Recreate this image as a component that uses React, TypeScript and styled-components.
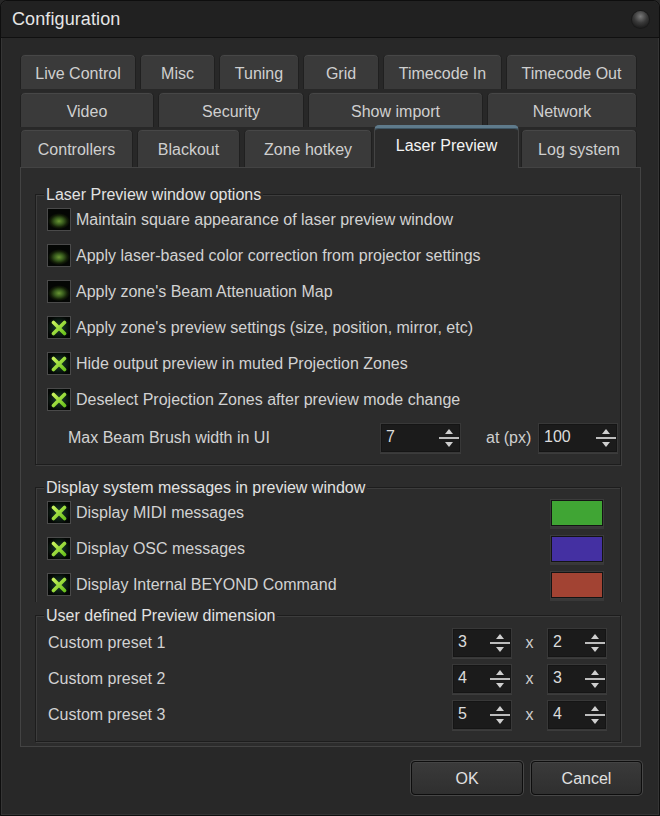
import React from "react";
import styled, { createGlobalStyle, css } from "styled-components";

const GlobalStyle = createGlobalStyle`
  html, body { margin: 0; padding: 0; background: #272727; }
  body { font-family: "Liberation Sans", Arial, sans-serif; }
  * { box-sizing: border-box; }
`;

const Window = styled.div`
  width: 660px;
  height: 816px;
  background: #282828;
  border: 1px solid #0e0e0e;
  border-radius: 7px 7px 0 0;
  box-shadow: inset 0 0 0 1px #353535;
  display: flex;
  flex-direction: column;
  overflow: hidden;
  color: #d0d0d0;
  font-size: 16px;
`;

const TitleBar = styled.div`
  height: 37px;
  flex: none;
  background: #212121;
  border-bottom: 1px solid #101010;
  border-radius: 6px 6px 0 0;
  display: flex;
  align-items: center;
  justify-content: space-between;
  padding: 0 10px 0 11px;
`;

const Title = styled.span`
  font-size: 18px;
  color: #e6e6e6;
  letter-spacing: 0.1px;
`;

const CloseKnob = styled.span`
  width: 17px;
  height: 17px;
  border-radius: 50%;
  background: radial-gradient(circle at 50% 32%, #7a7a7a 0%, #3a3a3a 45%, #141414 90%);
  box-shadow: 0 0 0 1px #1a1a1a;
`;

const Body = styled.div`
  flex: 1;
  padding: 16px 18px 0 19px;
  display: flex;
  flex-direction: column;
`;

const TabRow = styled.div<{ $h: number; $mb: number }>`
  display: flex;
  gap: 4px;
  width: 617px;
  height: ${(p) => p.$h}px;
  margin-bottom: ${(p) => p.$mb}px;
  align-items: flex-end;
  position: relative;
  z-index: 1;
`;

const Tab = styled.div<{ $w: number; $active?: boolean }>`
  flex: none;
  width: ${(p) => p.$w}px;
  height: 100%;
  background: #3a3a3a;
  border: 1px solid #202020;
  border-bottom: none;
  border-top-color: #2a2a2a;
  border-radius: 5px 5px 0 0;
  box-shadow: inset 0 1px 0 #474747;
  display: flex;
  align-items: center;
  justify-content: center;
  color: #cfcfcf;
  font-size: 16px;
  padding-top: 3px;
  white-space: nowrap;
  ${(p) =>
    p.$active &&
    css`
      height: 43px;
      margin: 0 -2px -1px;
      background: #2c2c2c;
      border-color: #444;
      border-top: 3px solid #5f7b8c;
      box-shadow: inset 0 1px 0 #3f5664;
      color: #f4f4f4;
      padding-top: 0;
      padding-bottom: 5px;
      position: relative;
      z-index: 2;
    `}
`;

const Panel = styled.div`
  width: 621px;
  background: #2c2c2c;
  border: 1px solid #434343;
  padding: 26px 19px 4px 14px;
  display: flex;
  flex-direction: column;
`;

const GroupBox = styled.div<{ $mt?: number; $pt: number; $pb: number; $open?: boolean }>`
  position: relative;
  margin-top: ${(p) => p.$mt ?? 0}px;
  padding: ${(p) => p.$pt}px 0 ${(p) => p.$pb}px;
  border: 1px solid #1d1d1d;
  box-shadow: inset 1px 1px 0 #3d3d3d, 1px 1px 0 #3d3d3d;
  display: flex;
  flex-direction: column;
  ${(p) =>
    p.$open &&
    css`
      border-bottom: none;
      box-shadow: inset 1px 1px 0 #3d3d3d, 1px 0 0 #3d3d3d;
    `}
`;

const Legend = styled.span`
  position: absolute;
  top: -9px;
  left: 8px;
  padding: 0 2px;
  background: #2c2c2c;
  line-height: 18px;
  font-size: 16px;
  color: #e2e2e2;
  white-space: nowrap;
`;

const CheckRow = styled.div`
  height: 36px;
  display: flex;
  align-items: center;
  padding: 1px 17px 0 11px;
  gap: 5px;
`;

const Label = styled.span<{ $w?: number }>`
  color: #d2d2d2;
  font-size: 16px;
  white-space: nowrap;
  ${(p) => p.$w !== undefined && css`width: ${p.$w}px; flex: none;`}
`;

const Grow = styled(Label)`
  flex: 1;
`;

const Box = styled.span<{ $checked?: boolean }>`
  flex: none;
  width: 24px;
  height: 23px;
  border: 1px solid #4a4a4a;
  display: flex;
  align-items: center;
  justify-content: center;
  background: ${(p) =>
    p.$checked
      ? "radial-gradient(ellipse 55% 55% at 50% 50%, #1d4632 0%, #0e2218 55%, #030604 100%)"
      : "radial-gradient(ellipse 50% 38% at 50% 58%, #6a9634 0%, #3a5e1e 40%, #142008 75%, #040604 100%)"};
`;

const Swatch = styled.span<{ $c: string }>`
  flex: none;
  width: 52px;
  height: 26px;
  background: ${(p) => p.$c};
  border: 1px solid #141414;
  box-shadow: 0 0 0 1px #3b3b3b, 0 2px 0 1px #383838;
`;

const FieldRow = styled.div<{ $pl: number; $mt?: number }>`
  height: 36px;
  margin-top: ${(p) => p.$mt ?? 0}px;
  display: flex;
  align-items: center;
  padding-left: ${(p) => p.$pl}px;
`;

const Spin = styled.div<{ $w: number }>`
  flex: none;
  width: ${(p) => p.$w}px;
  height: 28px;
  background: #1b1b1b;
  border: 1px solid #151515;
  box-shadow: 0 0 0 1px #383838, 0 1px 0 1px #3c3c3c;
  display: flex;
  align-items: center;
  justify-content: space-between;
  padding: 0 0 0 4px;
  color: #dcdcdc;
  font-size: 16px;
`;

const SpinValue = styled.span`
  padding-bottom: 2px;
`;

const Between = styled.span<{ $w: number; $ml?: number; $center?: boolean }>`
  flex: none;
  width: ${(p) => p.$w}px;
  margin-left: ${(p) => p.$ml ?? 0}px;
  text-align: ${(p) => (p.$center ? "center" : "left")};
  color: #cfcfcf;
  font-size: 16px;
  white-space: nowrap;
`;

const Footer = styled.div`
  width: 622px;
  display: flex;
  justify-content: flex-end;
  gap: 8px;
  padding-top: 14px;
`;

const Button = styled.button<{ $w: number }>`
  width: ${(p) => p.$w}px;
  height: 34px;
  border-radius: 4px;
  border: 1px solid #0d0d0d;
  background: linear-gradient(#3a3a3a, #2f2f2f);
  box-shadow: 0 0 0 1px #474747, inset 0 1px 0 #444;
  color: #e0e0e0;
  font-family: "Liberation Sans", Arial, sans-serif;
  font-size: 16px;
  padding: 2px 0 0;
`;

const XMark = () => (
  <svg width="16" height="16" viewBox="0 0 16 16">
    <defs>
      <linearGradient id="xg" x1="0" y1="0" x2="1" y2="1">
        <stop offset="0" stopColor="#c6f25a" />
        <stop offset="1" stopColor="#6cc41e" />
      </linearGradient>
    </defs>
    <path d="M2.5 2.5 L13.5 13.5 M13.5 2.5 L2.5 13.5" stroke="url(#xg)" strokeWidth="3.6" strokeLinecap="round" />
  </svg>
);

const Arrows = () => (
  <svg width="21" height="26" viewBox="0 0 21 26">
    <path d="M11 4 L15 9 L7 9 Z" fill="#cfcfcf" />
    <rect x="1" y="12" width="20" height="2" fill="#bdbdbd" />
    <path d="M7 17 L15 17 L11 22 Z" fill="#cfcfcf" />
  </svg>
);

const Check = ({ checked, label, color }: { checked?: boolean; label: string; color?: string }) => (
  <CheckRow>
    <Box $checked={checked}>{checked && <XMark />}</Box>
    <Grow>{label}</Grow>
    {color && <Swatch $c={color} />}
  </CheckRow>
);

const SpinBox = ({ w, v }: { w: number; v: string }) => (
  <Spin $w={w}>
    <SpinValue>{v}</SpinValue>
    <Arrows />
  </Spin>
);

const rows: { name: string; w: number; active?: boolean }[][] = [
  [
    { name: "Live Control", w: 116 },
    { name: "Misc", w: 75 },
    { name: "Tuning", w: 80 },
    { name: "Grid", w: 76 },
    { name: "Timecode In", w: 119 },
    { name: "Timecode Out", w: 131 },
  ],
  [
    { name: "Video", w: 134 },
    { name: "Security", w: 146 },
    { name: "Show import", w: 175 },
    { name: "Network", w: 150 },
  ],
  [
    { name: "Controllers", w: 113 },
    { name: "Blackout", w: 103 },
    { name: "Zone hotkey", w: 128 },
    { name: "Laser Preview", w: 145, active: true },
    { name: "Log system", w: 116 },
  ],
];

const rowGeom = [
  { h: 35, mb: 3 },
  { h: 35, mb: 2 },
  { h: 38, mb: 0 },
];

export default function App() {
  return (
    <>
      <GlobalStyle />
      <Window>
        <TitleBar>
          <Title>Configuration</Title>
          <CloseKnob />
        </TitleBar>
        <Body>
          {rows.map((r, i) => (
            <TabRow key={i} $h={rowGeom[i].h} $mb={rowGeom[i].mb}>
              {r.map((t) => (
                <Tab key={t.name} $w={t.w} $active={t.active}>
                  {t.name}
                </Tab>
              ))}
            </TabRow>
          ))}
          <Panel>
            <GroupBox $pt={6} $pb={8}>
              <Legend>Laser Preview window options</Legend>
              <Check label="Maintain square appearance of laser preview window" />
              <Check label="Apply laser-based color correction from projector settings" />
              <Check label="Apply zone's Beam Attenuation Map" />
              <Check checked label="Apply zone's preview settings (size, position, mirror, etc)" />
              <Check checked label="Hide output preview in muted Projection Zones" />
              <Check checked label="Deselect Projection Zones after preview mode change" />
              <FieldRow $pl={32} $mt={3}>
                <Label $w={313}>Max Beam Brush width in UI</Label>
                <SpinBox w={79} v="7" />
                <Between $w={41} $ml={26}>at (px)</Between>
                <Between $w={12} />
                <SpinBox w={78} v="100" />
              </FieldRow>
            </GroupBox>
            <GroupBox $mt={22} $pt={6} $pb={0} $open>
              <Legend>Display system messages in preview window</Legend>
              <Check checked label="Display MIDI messages" color="#40a534" />
              <Check checked label="Display OSC messages" color="#4430a2" />
              <Check checked label="Display Internal BEYOND Command" color="#a24333" />
            </GroupBox>
            <GroupBox $mt={13} $pt={9} $pb={8}>
              <Legend>User defined Preview dimension</Legend>
              {[
                ["1", "3", "2"],
                ["2", "4", "3"],
                ["3", "5", "4"],
              ].map(([n, a, b]) => (
                <FieldRow key={n} $pl={12}>
                  <Label $w={405}>Custom preset {n}</Label>
                  <SpinBox w={58} v={a} />
                  <Between $w={37} $center>
                    x
                  </Between>
                  <SpinBox w={58} v={b} />
                </FieldRow>
              ))}
            </GroupBox>
          </Panel>
          <Footer>
            <Button $w={112}>OK</Button>
            <Button $w={111}>Cancel</Button>
          </Footer>
        </Body>
      </Window>
    </>
  );
}
